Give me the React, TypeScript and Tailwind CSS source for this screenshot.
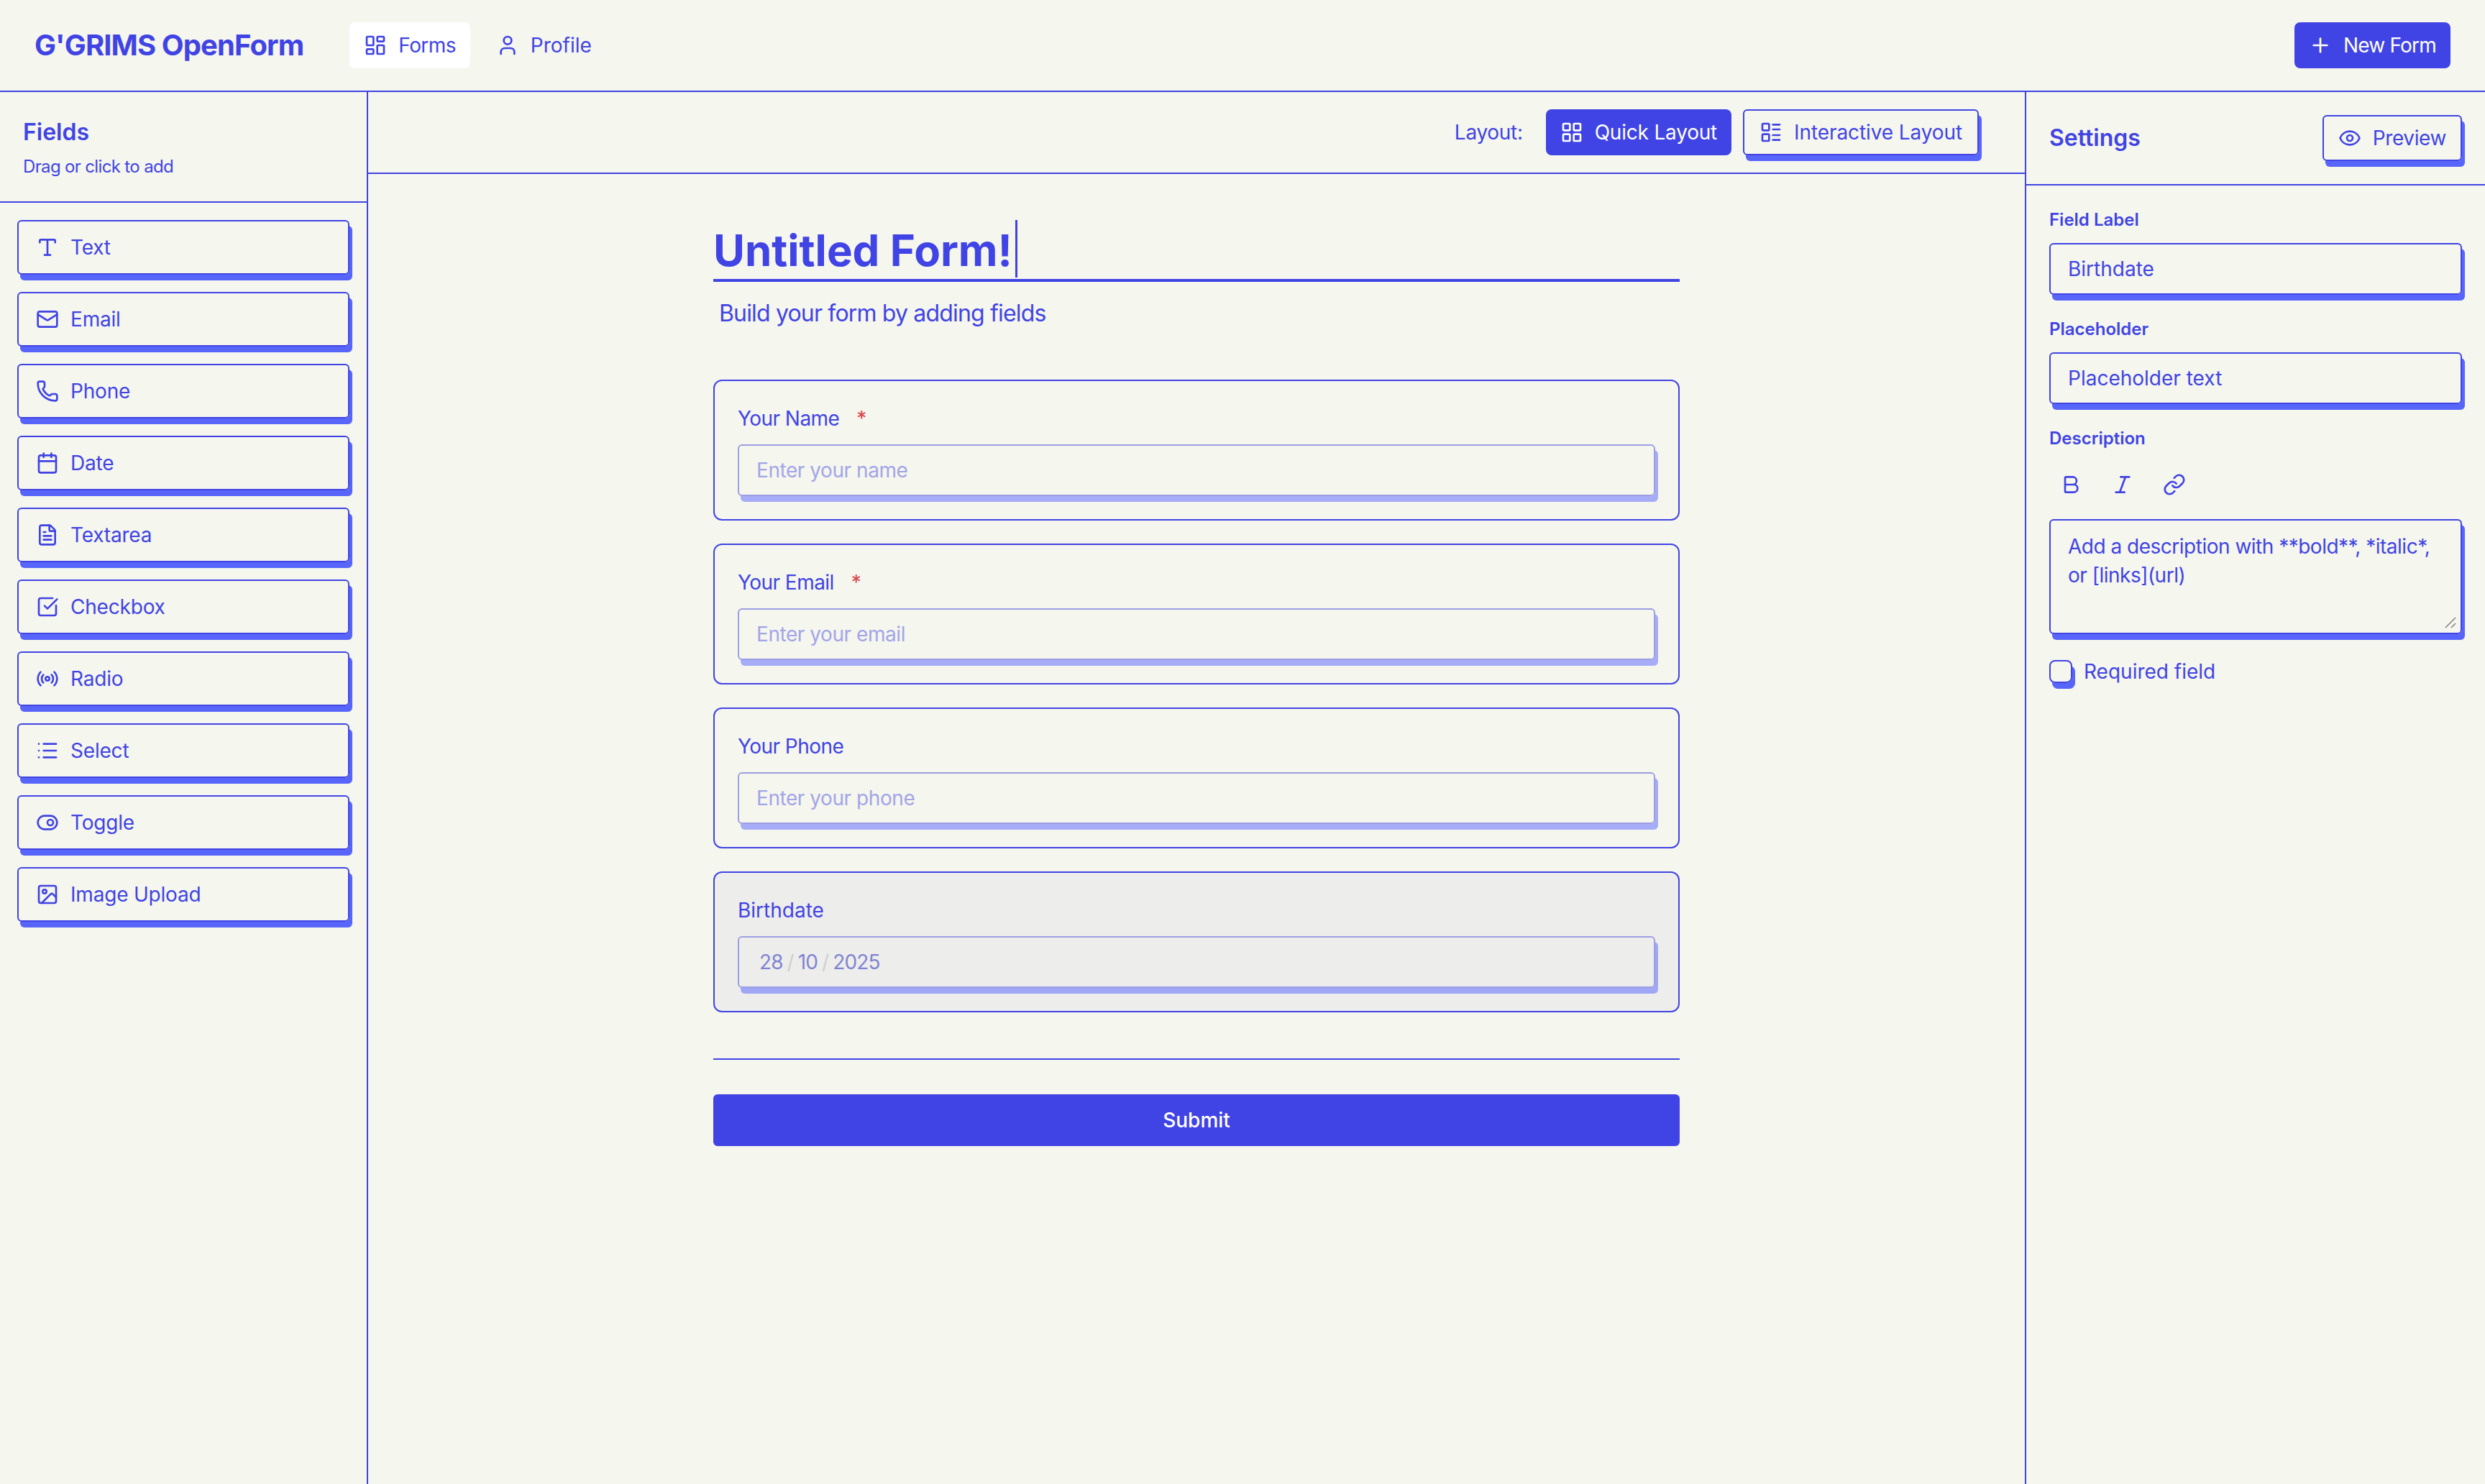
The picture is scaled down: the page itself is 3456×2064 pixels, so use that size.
import {
  Bold,
  Calendar,
  Eye,
  FileText,
  Image,
  Italic,
  LayoutDashboard,
  LayoutGrid,
  LayoutList,
  Link,
  List,
  Mail,
  Phone,
  Plus,
  Radio,
  SquareCheckBig,
  ToggleRight,
  Type,
  User,
} from 'lucide-react'

const fieldTypes = [
  { label: 'Text', icon: Type },
  { label: 'Email', icon: Mail },
  { label: 'Phone', icon: Phone },
  { label: 'Date', icon: Calendar },
  { label: 'Textarea', icon: FileText },
  { label: 'Checkbox', icon: SquareCheckBig },
  { label: 'Radio', icon: Radio },
  { label: 'Select', icon: List },
  { label: 'Toggle', icon: ToggleRight },
  { label: 'Image Upload', icon: Image },
]

const Header = () => {
  return (
    <header className="flex h-[128px] shrink-0 items-center justify-between border-b-2 border-[#4144e4] pl-12 pr-12">
      <div className="flex items-center gap-16">
        <h1 className="text-[40px] leading-[56px] font-bold tracking-[-0.9px]">G'GRIMS OpenForm</h1>
        <nav className="flex items-center gap-4">
          <a className="flex h-16 items-center gap-4 rounded-lg bg-white px-5 text-[28px] tracking-[-0.6px]">
            <LayoutDashboard className="h-8 w-8" />
            Forms
          </a>
          <a className="flex h-16 items-center gap-4 rounded-lg px-5 text-[28px]">
            <User className="h-8 w-8" />
            Profile
          </a>
        </nav>
      </div>
      <button className="flex h-16 items-center gap-4 rounded-lg bg-[#4144e4] px-5 text-[28px] tracking-[-0.8px] text-white">
        <Plus className="h-8 w-8" />
        New Form
      </button>
    </header>
  )
}

const FieldsSidebar = () => {
  return (
    <aside className="w-[512px] shrink-0 border-r-2 border-[#4144e4]">
      <div className="border-b-2 border-[#4144e4] p-8">
        <h2 className="text-[32px] leading-[48px] font-semibold">Fields</h2>
        <p className="mt-2 text-[24px] leading-[32px] tracking-[-0.65px]">Drag or click to add</p>
      </div>
      <div className="flex flex-col gap-6 p-6">
        {fieldTypes.map((item) => (
          <div
            key={item.label}
            className="flex items-center gap-4 rounded-md border-2 border-[#4144e4] px-6 py-4 text-[28px] leading-[40px] tracking-[-0.2px] shadow-[4px_8px_0_0_#5865fa]"
          >
            <item.icon className="h-8 w-8" />
            {item.label}
          </div>
        ))}
      </div>
    </aside>
  )
}

type FieldCardProps = {
  label: string
  placeholder: string
  required?: boolean
}

const FieldCard = (props: FieldCardProps) => {
  return (
    <div className="rounded-xl border-2 border-[#4144e4] p-8">
      <label className="mb-4 flex gap-6 text-[28px] leading-[40px] tracking-[-0.55px]">
        {props.label}
        {props.required && <span className="text-[#d9484f]">*</span>}
      </label>
      <input
        placeholder={props.placeholder}
        className="h-[72px] w-full rounded-md border-2 border-[#9c9ee3] px-6 text-[28px] tracking-[-0.44px] shadow-[4px_8px_0_0_#a6acf6] outline-none placeholder:text-[#a3a5e8]"
      />
    </div>
  )
}

const FormCanvas = () => {
  return (
    <main className="flex min-w-0 flex-1 flex-col">
      <div className="flex h-[114px] shrink-0 items-center justify-end gap-8 border-b-2 border-[#4144e4] pr-16">
        <span className="text-[28px] tracking-[-0.3px]">Layout:</span>
        <div className="flex gap-4">
          <button className="flex h-16 items-center gap-4 rounded-lg bg-[#4144e4] px-5 text-[28px] tracking-[-0.2px] text-white">
            <LayoutGrid className="h-8 w-8" />
            Quick Layout
          </button>
          <button className="flex h-16 items-center gap-4 rounded-md border-2 border-[#4144e4] px-[21px] text-[28px] tracking-[-0.1px] shadow-[4px_8px_0_0_#5865fa]">
            <LayoutList className="h-8 w-8" />
            Interactive Layout
          </button>
        </div>
      </div>
      <div className="mx-auto w-[1344px] pt-12">
        <div className="flex items-center border-b-4 border-[#4144e4] pt-4 pb-0.5">
          <span className="h-20 pt-0.5 text-[60px] leading-[80px] font-bold">Untitled Form!</span>
          <span className="ml-1 h-[80px] w-[3px] bg-[#4144e4]" />
        </div>
        <p className="mt-5 mb-[68px] pl-2 text-[32px] leading-[48px] tracking-[-0.83px]">
          Build your form by adding fields
        </p>
        <div className="flex flex-col gap-8">
          <FieldCard label="Your Name" placeholder="Enter your name" required />
          <FieldCard label="Your Email" placeholder="Enter your email" required />
          <FieldCard label="Your Phone" placeholder="Enter your phone" />
          <div className="rounded-xl border-2 border-[#4144e4] bg-[#ededeb] p-8">
            <label className="mb-4 block text-[28px] leading-[40px]">Birthdate</label>
            <div className="flex h-[72px] w-full items-center rounded-md border-2 border-[#9c9ee3] px-7 text-[28px] tracking-[-0.9px] text-[#8184d2] shadow-[4px_8px_0_0_#a0a7f5]">
              28
              <span className="mx-1.5 text-[#cfcfcf]">/</span>
              10
              <span className="mx-1.5 text-[#cfcfcf]">/</span>
              2025
            </div>
          </div>
        </div>
        <div className="mt-16 border-t-2 border-[#4144e4] pt-12">
          <button className="h-[72px] w-full rounded-md bg-[#4144e4] text-[28px] font-medium text-white">Submit</button>
        </div>
      </div>
    </main>
  )
}

const SettingsPanel = () => {
  return (
    <aside className="w-[640px] shrink-0 border-l-2 border-[#4144e4]">
      <div className="flex items-center justify-between border-b-2 border-[#4144e4] p-8">
        <h2 className="text-[32px] leading-[48px] font-semibold">Settings</h2>
        <button className="flex h-16 items-center gap-4 rounded-md border-2 border-[#4144e4] px-5 text-[28px] tracking-[-0.4px] shadow-[4px_8px_0_0_#5865fa]">
          <Eye className="h-8 w-8" />
          Preview
        </button>
      </div>
      <div className="flex flex-col p-8">
        <label className="mb-4 text-[24px] leading-[32px] font-semibold">Field Label</label>
        <input
          defaultValue="Birthdate"
          className="h-[72px] rounded-md border-2 border-[#4144e4] px-6 text-[28px] shadow-[4px_8px_0_0_#5865fa] outline-none"
        />
        <label className="mt-8 mb-4 text-[24px] leading-[32px] font-semibold">Placeholder</label>
        <input
          defaultValue="Placeholder text"
          className="h-[72px] rounded-md border-2 border-[#4144e4] px-6 text-[28px] shadow-[4px_8px_0_0_#5865fa] outline-none"
        />
        <label className="mt-8 mb-4 text-[24px] leading-[32px] font-semibold">Description</label>
        <div className="mb-4 flex gap-3">
          <button className="flex h-16 w-15 items-center justify-center">
            <Bold className="h-8 w-8" />
          </button>
          <button className="flex h-16 w-15 items-center justify-center">
            <Italic className="h-8 w-8" />
          </button>
          <button className="flex h-16 w-15 items-center justify-center">
            <Link className="h-8 w-8" />
          </button>
        </div>
        <div className="relative">
          <textarea
            defaultValue="Add a description with **bold**, *italic*, or [links](url)"
            className="block h-40 w-full resize-none rounded-md border-2 border-[#4144e4] px-6 py-4 text-[28px] leading-[40px] tracking-[-0.5px] shadow-[4px_8px_0_0_#5865fa] outline-none"
          />
          <svg className="absolute right-2 bottom-2 h-4 w-4" viewBox="0 0 16 16" stroke="#777" strokeWidth="1.4" fill="none">
            <path d="M1 15 15 1M9 15l6-6" />
          </svg>
        </div>
        <label className="mt-9 flex items-center gap-4 text-[28px] leading-8">
          <span className="h-8 w-8 rounded-lg border-2 border-[#4144e4] shadow-[4px_8px_0_0_#5865fa]" />
          Required field
        </label>
      </div>
    </aside>
  )
}

export default function App() {
  return (
    <div className="flex h-screen w-screen flex-col overflow-hidden bg-[#f5f6ee] font-['Inter',sans-serif] text-[#4144e4]">
      <Header />
      <div className="flex min-h-0 flex-1">
        <FieldsSidebar />
        <FormCanvas />
        <SettingsPanel />
      </div>
    </div>
  )
}
